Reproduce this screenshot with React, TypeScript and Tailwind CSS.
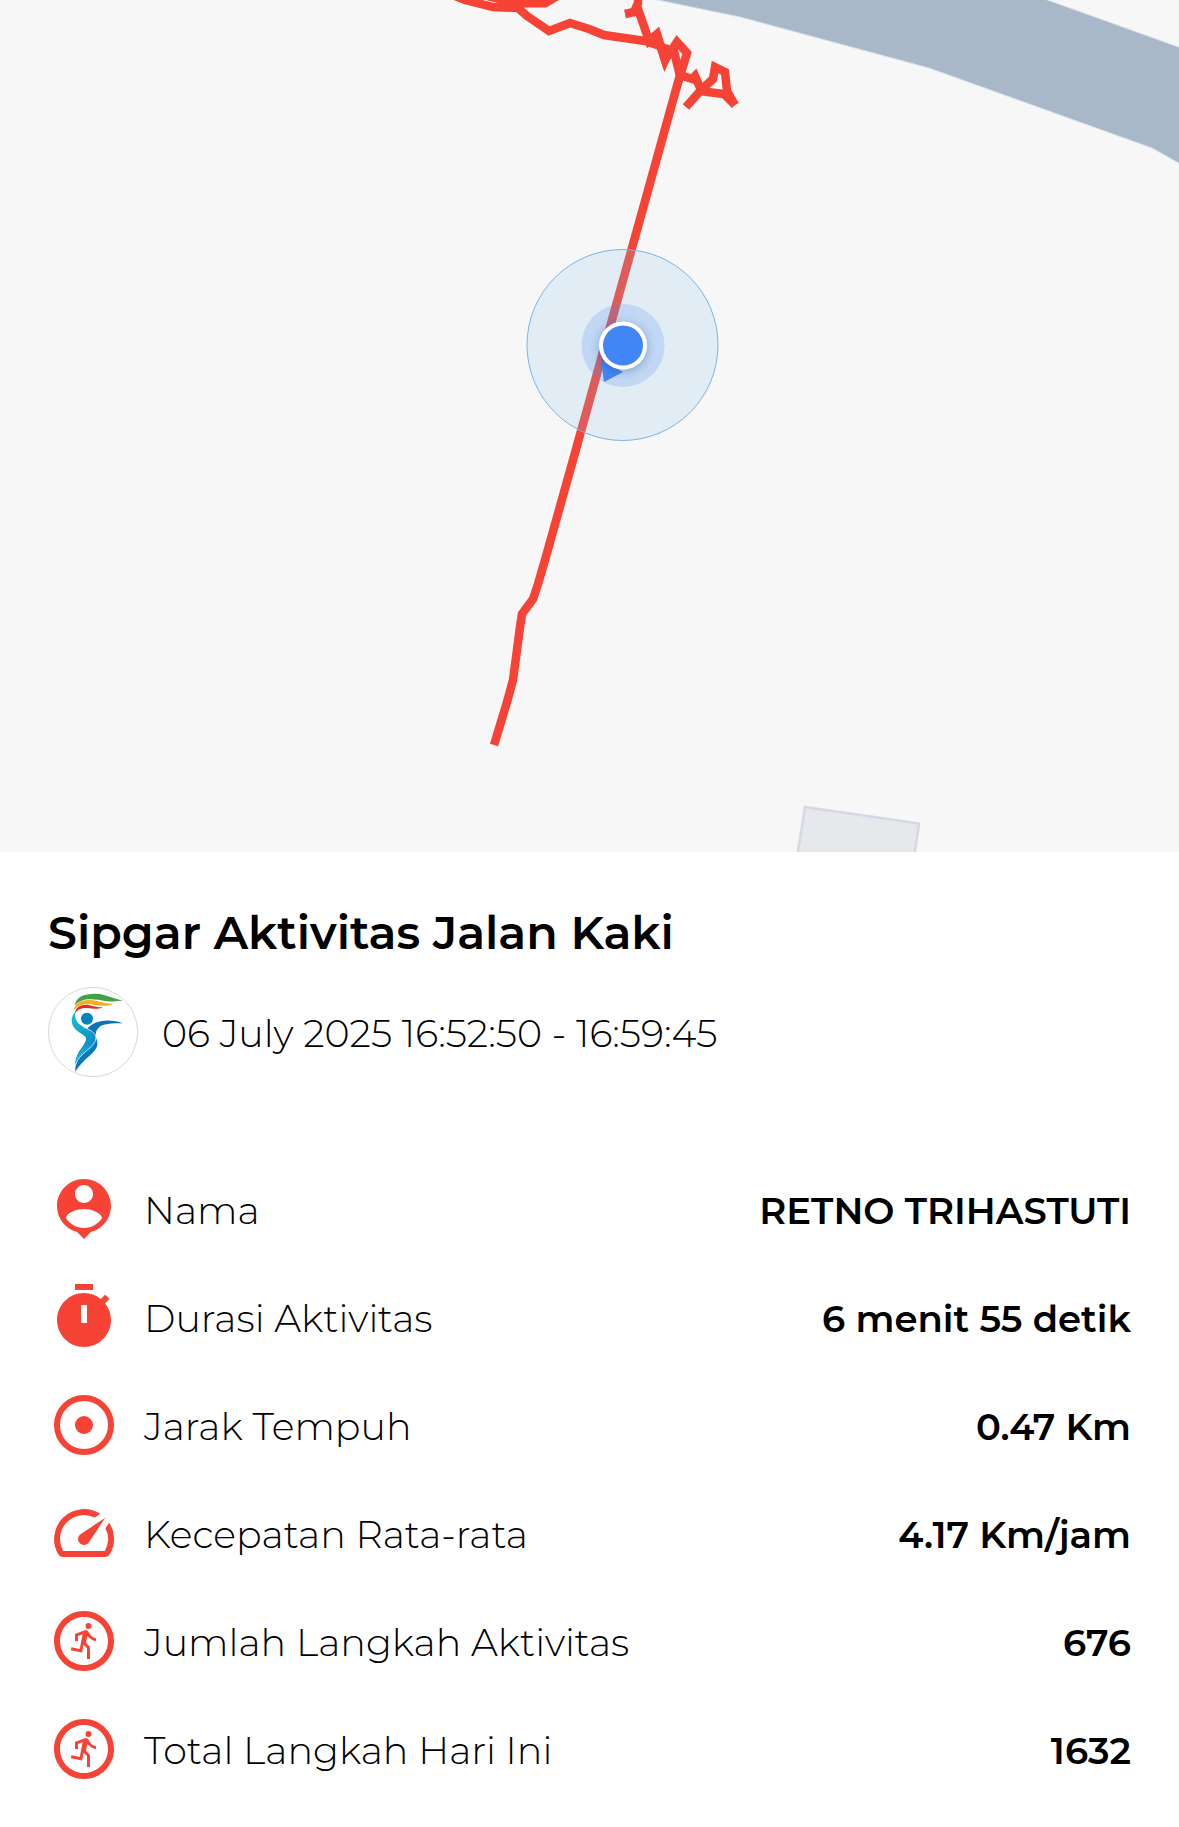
import React from "react";
import { MdOutlineRunCircle } from "react-icons/md";

const ICON_CLASS = "h-[72px] w-[72px] shrink-0 text-[#f64336]";

function PersonPinIcon() {
  return (
    <svg viewBox="0 0 24 24" fill="currentColor" className={ICON_CLASS} aria-hidden="true">
      <path d="M12 2c-4.97 0-9 4.03-9 9 0 4.17 2.84 7.67 6.69 8.69L12 22l2.31-2.31C18.16 18.67 21 15.17 21 11c0-4.97-4.03-9-9-9zm0 2c1.66 0 3 1.34 3 3s-1.34 3-3 3-3-1.34-3-3 1.34-3 3-3zm0 14.3c-2.5 0-4.71-1.28-6-3.22.03-1.99 4-3.08 6-3.08 1.99 0 5.97 1.09 6 3.08-1.29 1.94-3.5 3.22-6 3.22z" />
    </svg>
  );
}

function TimerIcon() {
  return (
    <svg viewBox="0 0 24 24" fill="currentColor" className={ICON_CLASS} aria-hidden="true">
      <path d="M9 1h6v2H9z" />
      <path
        fillRule="evenodd"
        d="M19.03 7.39l1.42-1.42c-.43-.51-.9-.99-1.41-1.41l-1.42 1.42C16.07 4.74 14.12 4 12 4c-4.97 0-9 4.03-9 9s4.02 9 9 9 9-4.03 9-9c0-2.12-.74-4.07-1.97-5.61zM13 14h-2V8h2v6z"
      />
    </svg>
  );
}

function TargetIcon() {
  return (
    <svg viewBox="0 0 24 24" className={ICON_CLASS} aria-hidden="true">
      <circle cx="12" cy="12" r="9" fill="none" stroke="currentColor" strokeWidth="2" />
      <circle cx="12" cy="12" r="3" fill="currentColor" />
    </svg>
  );
}

function SpeedIcon() {
  return (
    <svg viewBox="0 0 24 24" fill="currentColor" className={ICON_CLASS} aria-hidden="true">
      <path d="M20.38 8.57l-1.23 1.85a8 8 0 0 1-.22 7.58H5.07A8 8 0 0 1 15.58 6.85l1.85-1.23A10 10 0 0 0 3.35 19a2 2 0 0 0 1.72 1h13.85a2 2 0 0 0 1.74-1 10 10 0 0 0-.27-10.44z" />
      <path d="M10.59 15.41a2 2 0 0 0 2.83 0l5.66-8.49-8.49 5.66a2 2 0 0 0 0 2.83z" />
    </svg>
  );
}

function RunIcon() {
  return <MdOutlineRunCircle className={ICON_CLASS} aria-hidden="true" />;
}

const STATS = [
  { label: "Nama", value: "RETNO TRIHASTUTI", Icon: PersonPinIcon },
  { label: "Durasi Aktivitas", value: "6 menit 55 detik", Icon: TimerIcon },
  { label: "Jarak Tempuh", value: "0.47 Km", Icon: TargetIcon },
  { label: "Kecepatan Rata-rata", value: "4.17 Km/jam", Icon: SpeedIcon },
  { label: "Jumlah Langkah Aktivitas", value: "676", Icon: RunIcon },
  { label: "Total Langkah Hari Ini", value: "1632", Icon: RunIcon },
];

function ActivityMap() {
  return (
    <svg viewBox="0 0 1179 852" className="block h-auto w-full bg-[#f7f7f7]" role="img" aria-label="Peta">
      <defs>
        <filter id="dotShadow" x="-50%" y="-50%" width="200%" height="200%">
          <feDropShadow dx="0" dy="2" stdDeviation="5" floodColor="#1e3a6e" floodOpacity="0.35" />
        </filter>
      </defs>

      {/* River */}
      <path d="M648 -2L740 17L929 68L1152 148L1184 166V49L1042 -2Z" fill="#a9b8c9" stroke="#d9dfe6" strokeWidth="1" />

      {/* Building */}
      <path d="M797 858L805 807L919 823.500L914 858Z" fill="#e7e8ec" stroke="#d6d8e6" strokeWidth="2.5" />

      {/* Walked track */}
      <g fill="none" stroke="#f64336" strokeWidth="8.5" strokeMiterlimit="6">
        <path d="M455 -4L465 0L493 7L518 8L527 16L549 31L570 23L589 29L604 35L645 41L660 46L668 50" />
        <path d="M488 -4L516 3L545 3L562 -7" strokeWidth="9" />
        <path d="M625 14L634 12L638 3V-5" />
        <path d="M637 6L649 41L657 34L665 60L677 42L687 53L680 76L673 47" />
        <path d="M657 36L665 60L671 46" />
        <path d="M680 75L692 79L695 76L701 90" />
        <path d="M686 107L701 90L713 79L715 67L725 72L727 91L735 105" />
        <path d="M700 91L724 94L735 105" />
        <path d="M680 75L637 230L573 460L545 560L538 584L533 599L522 614L520 627L513 680L507 702L494 745" />
      </g>

      {/* Current position */}
      <circle cx="622.5" cy="345" r="95.5" fill="#8ec5ed" fillOpacity="0.2" stroke="#7fb2e2" strokeWidth="1" />
      <circle cx="623" cy="345.5" r="41.5" fill="#4285f4" fillOpacity="0.2" />
      <path d="M601 360L604 382L623 372Z" fill="#4285f4" />
      <circle cx="623" cy="345.5" r="24" fill="#ffffff" filter="url(#dotShadow)" />
      <circle cx="623" cy="345.5" r="20" fill="#4285f4" />
    </svg>
  );
}

function SipgarLogo() {
  return (
    <svg viewBox="54 291 270 270" className="h-[90px] w-[90px] shrink-0" role="img" aria-label="Sipgar">
      <defs>
        <linearGradient id="bodyLeft" x1="125" y1="370" x2="200" y2="470" gradientUnits="userSpaceOnUse">
          <stop offset="0" stopColor="#12c4d8" />
          <stop offset="1" stopColor="#0a86c4" />
        </linearGradient>
        <linearGradient id="legLeft" x1="135" y1="510" x2="195" y2="460" gradientUnits="userSpaceOnUse">
          <stop offset="0" stopColor="#12c4d8" />
          <stop offset="1" stopColor="#0a8ac8" />
        </linearGradient>
      </defs>
      <circle cx="189" cy="426" r="134" fill="#ffffff" stroke="#c4c4c4" strokeWidth="2" />
      {/* Flame */}
      <path d="M134 346C138 322 160 311 196 311C230 312 248 327 279 331C252 337 230 334 205 329C172 325 150 328 134 346Z" fill="#43a047" />
      <path d="M132 361C133 340 152 329 180 330C207 332 224 342 252 341C230 351 209 347 190 344C164 341 145 344 132 361Z" fill="#f4ae22" />
      <path d="M135 370C135 353 150 344 170 344C189 346 199 353 219 352C202 359 186 356 172 354C155 353 144 357 135 370Z" fill="#e02b26" />
      {/* Figure */}
      <circle cx="171" cy="386" r="18" fill="#0582c0" />
      <path d="M135 366C118 386 124 409 142 423C158 435 172 438 167 452C158 474 137 488 135 524C144 500 199 477 198 443C192 427 176 419 161 411C137 399 135 384 135 366Z" fill="url(#bodyLeft)" />
      <path d="M135 524C138 498 154 481 167 461L199 444C194 480 148 492 135 524Z" fill="url(#legLeft)" />
      <path d="M172 416C192 391 238 384 279 400C246 400 216 401 205 414C198 422 196 431 198 440C190 430 182 422 172 416Z" fill="#0873b8" />
      <path d="M198 443C207 463 201 476 185 491C166 509 147 524 136 546C133 515 151 499 171 484C188 470 197 461 198 443Z" fill="#0878be" />
      <path d="M160 412C184 420 197 429 198 443C197 474 143 490 136 527" fill="none" stroke="#ffffff" strokeWidth="2" />
    </svg>
  );
}

export default function App() {
  return (
    <main className="w-full bg-white font-['Montserrat','Inter',sans-serif] text-black">
      <ActivityMap />

      <section className="px-12 pt-[53px] pb-[42px]">
        <h1 className="text-[46px] leading-[56px] font-semibold">Sipgar Aktivitas Jalan Kaki</h1>

        <div className="mt-[26px] flex items-center gap-6">
          <SipgarLogo />
          <p className="pt-1 text-[38px] leading-[48px] font-light">06 July 2025 16:52:50 - 16:59:45</p>
        </div>

        <dl className="mt-24 flex flex-col gap-9">
          {STATS.map(({ label, value, Icon }) => (
            <div key={label} className="flex items-center gap-6">
              <Icon />
              <dt className="pt-1 text-[38px] leading-[48px] font-light">{label}</dt>
              <dd className="ml-auto pt-1 text-right text-[37px] leading-[48px] font-semibold">{value}</dd>
            </div>
          ))}
        </dl>
      </section>
    </main>
  );
}
